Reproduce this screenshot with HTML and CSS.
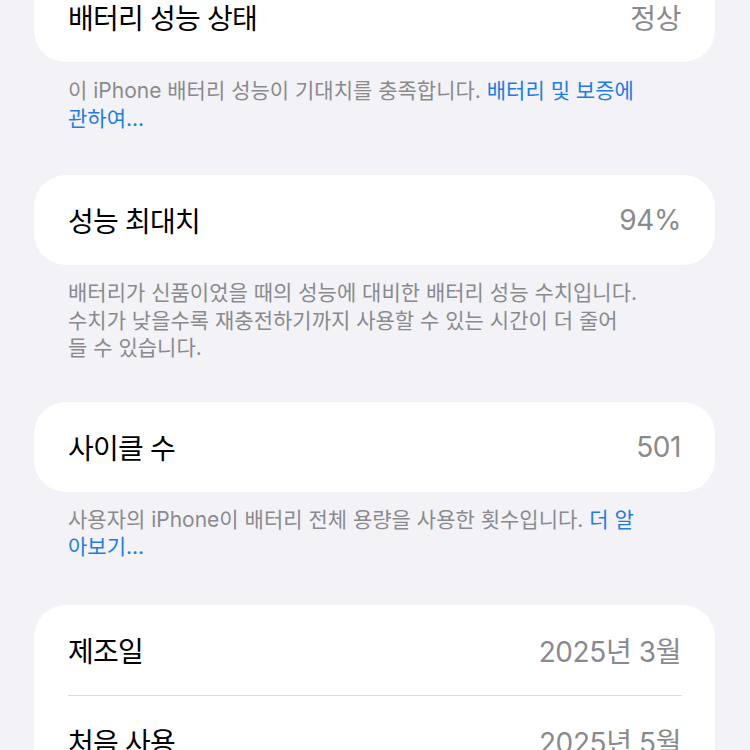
FILE: index.html
```html
<!DOCTYPE html>
<html lang="ko">
<head>
<meta charset="utf-8">
<title>배터리 성능 상태</title>
<link rel="stylesheet" href="styles.css">
</head>
<body>
<main class="page">
  <section class="card">
    <div class="row"><span class="label">배터리 성능 상태</span><span class="value">정상</span></div>
  </section>
  <p class="footer footer-first">이 iPhone 배터리 성능이 기대치를 충족합니다. <a class="link" href="#">배터리 및 보증에 관하여...</a></p>

  <section class="card">
    <div class="row"><span class="label">성능 최대치</span><span class="value">94%</span></div>
  </section>
  <p class="footer footer-tight">배터리가 신품이었을 때의 성능에 대비한 배터리 성능 수치입니다. 수치가 낮을수록 재충전하기까지 사용할 수 있는 시간이 더 줄어<br>들 수 있습니다.</p>

  <section class="card">
    <div class="row"><span class="label">사이클 수</span><span class="value">501</span></div>
  </section>
  <p class="footer">사용자의 iPhone이 배터리 전체 용량을 사용한 횟수입니다. <a class="link" href="#">더 알아보기...</a></p>

  <section class="card">
    <div class="row"><span class="label">제조일</span><span class="value">2025년 3월</span></div>
    <div class="sep"></div>
    <div class="row"><span class="label">처음 사용</span><span class="value">2025년 5월</span></div>
  </section>
</main>
</body>
</html>
```
FILE: styles.css
```css
html, body {
  margin: 0;
  padding: 0;
  background: #f2f2f7;
}
body {
  font-family: "Inter", "Noto Sans CJK KR", sans-serif;
  -webkit-font-smoothing: antialiased;
  overflow: hidden;
  height: 750px;
}
.page {
  margin-top: -28px;
  padding: 0 35px 0 34px;
  display: flex;
  flex-direction: column;
}
.card {
  background: #ffffff;
  border-radius: 32px;
  display: flex;
  flex-direction: column;
}
.row {
  height: 90px;
  display: flex;
  align-items: center;
  justify-content: space-between;
  padding: 0 34px;
}
.label {
  font-size: 28px;
  color: #000000;
  letter-spacing: -0.8px;
}
.value {
  font-size: 28px;
  color: #8a8a8e;
  letter-spacing: -0.4px;
}
.sep {
  height: 1px;
  background: #dcdcdf;
  margin: 0 33px 0 34px;
}
.footer {
  margin: 0 0 44px 0;
  padding: 14px 0 0 34px;
  width: 570px;
  font-size: 21px;
  line-height: 27.5px;
  color: #8a8a8e;
  letter-spacing: 0;
}
.footer-first {
  padding-top: 15px;
  margin-bottom: 43px;
}
.footer-tight {
  margin-bottom: 40px;
}
.link {
  color: #1f7ddf;
  text-decoration: none;
}
```
